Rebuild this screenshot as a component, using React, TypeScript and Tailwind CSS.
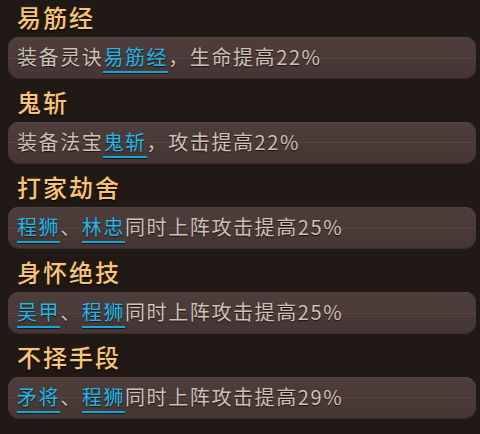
type Part = { text: string; link?: boolean };

type Bond = { title: string; parts: Part[] };

const bonds: Bond[] = [
  {
    title: "易筋经",
    parts: [{ text: "装备灵诀" }, { text: "易筋经", link: true }, { text: "，生命提高22%" }],
  },
  {
    title: "鬼斩",
    parts: [{ text: "装备法宝" }, { text: "鬼斩", link: true }, { text: "，攻击提高22%" }],
  },
  {
    title: "打家劫舍",
    parts: [
      { text: "程狮", link: true },
      { text: "、" },
      { text: "林忠", link: true },
      { text: "同时上阵攻击提高25%" },
    ],
  },
  {
    title: "身怀绝技",
    parts: [
      { text: "吴甲", link: true },
      { text: "、" },
      { text: "程狮", link: true },
      { text: "同时上阵攻击提高25%" },
    ],
  },
  {
    title: "不择手段",
    parts: [
      { text: "矛将", link: true },
      { text: "、" },
      { text: "程狮", link: true },
      { text: "同时上阵攻击提高29%" },
    ],
  },
];

function BondRow({ bond }: { bond: Bond }) {
  return (
    <div className="flex flex-col">
      <div className="h-[33px] pl-[17px] text-[24px] font-medium leading-[26px] tracking-[2px] text-[#f4c57c] [text-shadow:0_1px_2px_#000,0_0_3px_#4a2c10]">
        {bond.title}
      </div>
      {/* rounded panel with a faint seam across the middle */}
      <div className="ml-2 mr-1 flex h-[41px] items-center rounded-[11px] bg-[linear-gradient(to_bottom,#4e3e3b_0%,#4b3b38_50%,#564542_50%,#564542_calc(50%+1px),#4a3a37_calc(50%+1px),#463633_100%)] pl-[9px] shadow-[0_1px_0_#3b2c29,inset_0_1px_0_#54433e]">
        <span className="text-[20px] leading-[26px] tracking-[1.6px] text-[#cdc1b8] [text-shadow:0_1px_1px_#1c1310]">
          {bond.parts.map((p, i) =>
            p.link ? (
              <span
                key={i}
                className="inline-block border-b-2 border-[#18a6d6] leading-[28px] text-[#22b7e8] shadow-[0_1px_0_#0f1a20]"
              >
                {p.text}
              </span>
            ) : (
              <span key={i}>{p.text}</span>
            ),
          )}
        </span>
      </div>
    </div>
  );
}

export default function App() {
  return (
    <div
      className="flex h-[434px] w-[480px] flex-col gap-[11px] overflow-hidden bg-[#211915] pt-[4px]"
      style={{ fontFamily: '"Noto Sans CJK SC", "Noto Sans", sans-serif' }}
    >
      {bonds.map((b) => (
        <BondRow key={b.title} bond={b} />
      ))}
    </div>
  );
}
